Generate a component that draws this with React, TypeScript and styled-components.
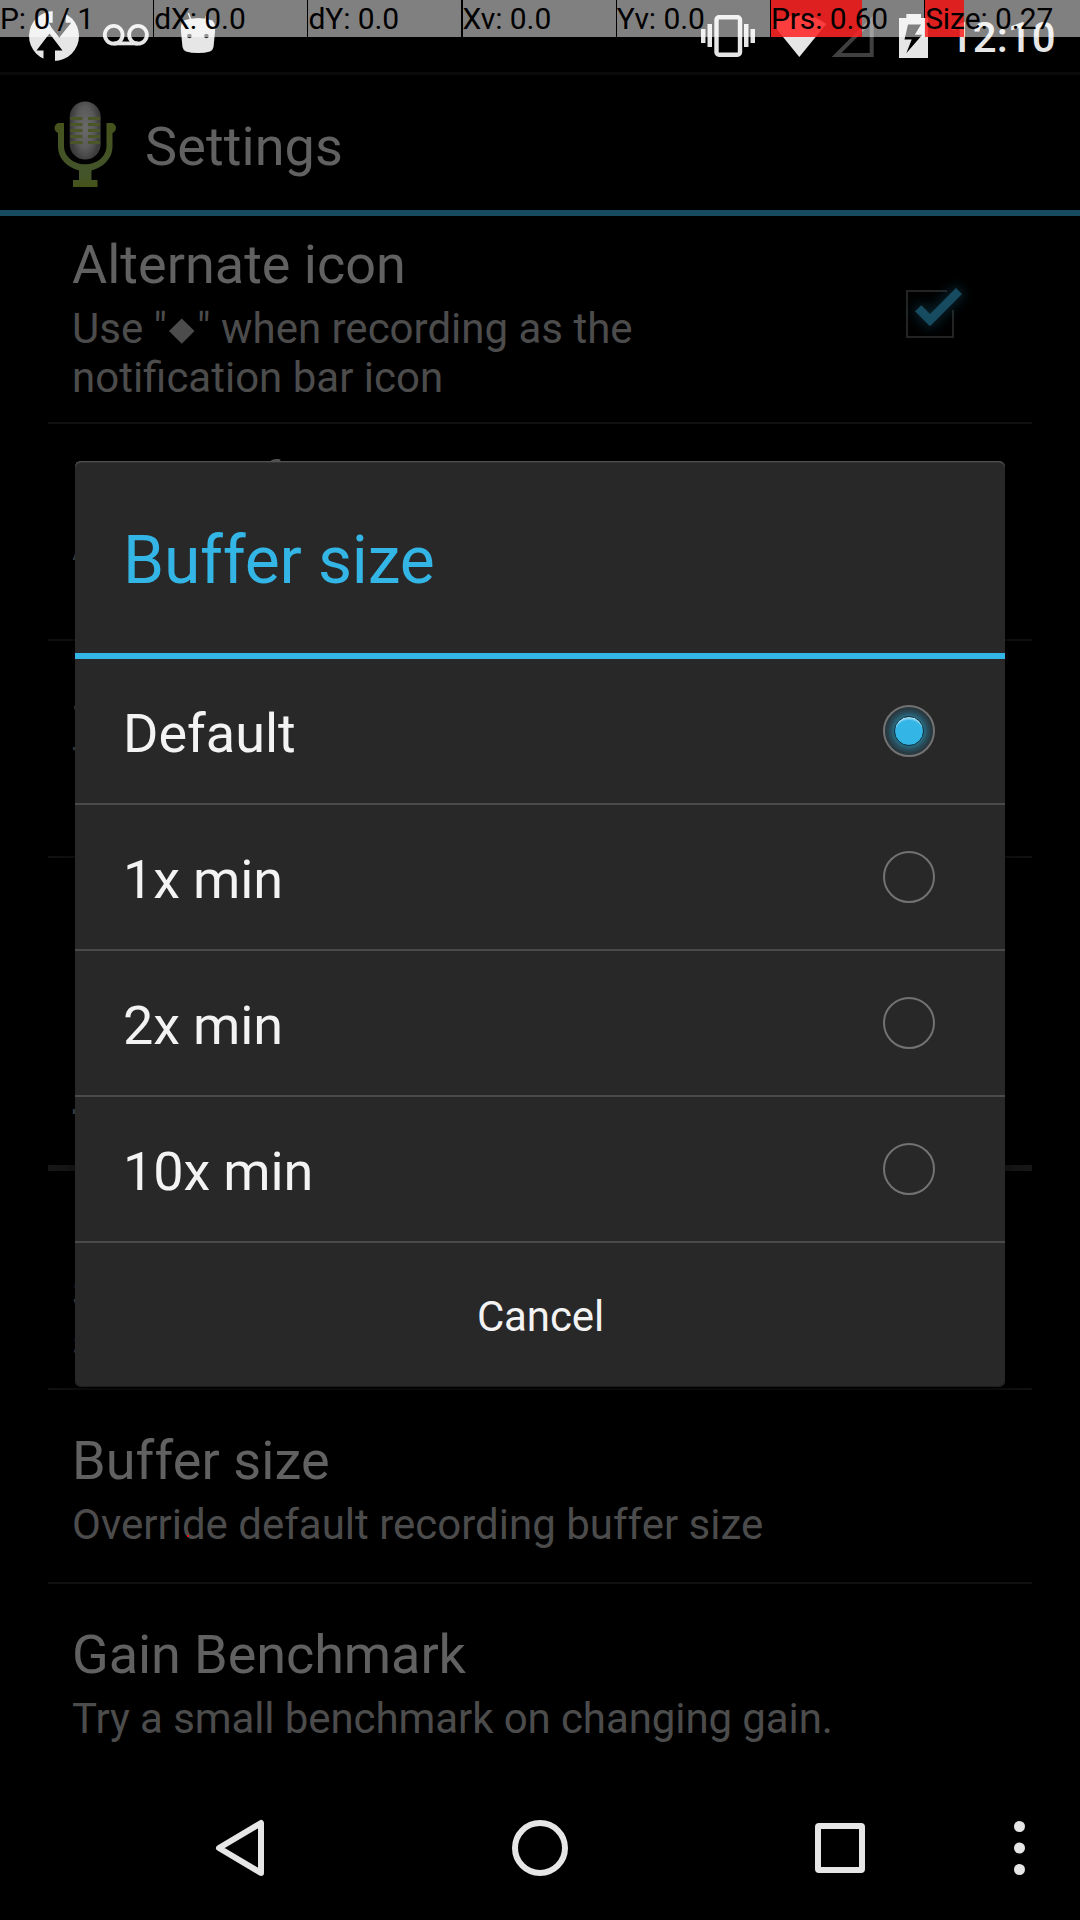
import React from 'react';
import styled, { createGlobalStyle } from 'styled-components';

const GlobalStyle = createGlobalStyle`
  html, body { margin: 0; background: #000; }
  *, *::before, *::after { box-sizing: border-box; }
`;

const Screen = styled.div`
  position: relative;
  display: flex;
  flex-direction: column;
  width: 1080px;
  height: 1920px;
  overflow: hidden;
  background: #000;
  color: #616161;
  font-family: Roboto, 'Noto Sans', sans-serif;
`;

/* Status bar */
const StatusBar = styled.header`
  display: flex;
  justify-content: space-between;
  height: 75px;
  border-bottom: 3px solid #0a0a0a;
  color: #e6e6e6;
`;

const IconGroup = styled.div`
  display: flex;
`;

const Clock = styled.span`
  width: 131px;
  margin-left: -6px;
  padding: 13px 24px 0 0;
  font-size: 42px;
  line-height: 49px;
  font-weight: 500;
`;

/* Pointer location overlay */
const PointerBar = styled.div`
  position: absolute;
  top: 0;
  left: 0;
  display: grid;
  grid-template-columns: repeat(6, 153px) 156px;
  column-gap: 1.2px;
  width: 1080px;
  height: 37px;
`;

const PointerCell = styled.div<{ $level?: number }>`
  padding-top: 1px;
  color: #000;
  font-size: 30px;
  line-height: 35px;
  letter-spacing: -0.08px;
  white-space: nowrap;
  background: ${({ $level = 0 }) =>
    `linear-gradient(90deg, rgba(255,0,0,.75) ${$level}px, transparent ${$level}px), rgba(255,255,255,.5)`};
`;

const TouchDot = styled.i`
  position: absolute;
  left: 187px;
  top: 1535px;
  width: 2px;
  height: 2px;
  background: #f00;
`;

/* Settings page */
const ActionBar = styled.div`
  display: flex;
  height: 141px;
  border-bottom: 6px solid #174c60;
`;

const Heading = styled.h1`
  margin: 40px 0 0 9px;
  font-size: 54px;
  line-height: 63px;
  font-weight: 400;
  letter-spacing: 0.1px;
`;

const List = styled.main`
  height: 1560px;
  padding: 0 48px;
  overflow: hidden;
`;

const Row = styled.section<{ $height: number; $offset?: number; $last?: boolean }>`
  display: flex;
  align-items: center;
  justify-content: space-between;
  height: ${({ $height }) => $height}px;
  margin-top: ${({ $offset = 0 }) => $offset}px;
  padding: 6px 44px 0 24px;
  border-bottom: ${({ $last }) => ($last ? 0 : 2)}px solid #101010;
`;

const Title = styled.h2<{ $track?: number }>`
  height: 63px;
  margin: 0 0 8px;
  font-size: 54px;
  line-height: 63px;
  font-weight: 400;
  letter-spacing: ${({ $track = 0 }) => $track}px;
`;

const Summary = styled.p<{ $lines?: number; $track?: number }>`
  height: ${({ $lines = 1 }) => $lines * 49}px;
  margin: 0;
  color: #4c4c4c;
  font-size: 42px;
  line-height: 49px;
  letter-spacing: ${({ $track = 0 }) => $track}px;
  white-space: pre-line;
`;

const Diamond = styled.span`
  display: inline-block;
  width: 17.5px;
  height: 17.5px;
  margin: 0 6.5px 4px 6px;
  background: #4c4c4c;
  transform: rotate(45deg);
`;

const CheckSlot = styled.div`
  display: flex;
  height: 88px;
`;

const Category = styled.h3`
  height: 98px;
  margin: 0;
  padding: 27px 24px 0;
  border-bottom: 6px solid #161616;
  color: #4c4c4c;
  font-size: 42px;
  line-height: 49px;
  font-weight: 700;
`;

/* Dialog */
const Dialog = styled.div`
  position: absolute;
  left: 75px;
  top: 461px;
  display: flex;
  flex-direction: column;
  width: 930px;
  height: 926px;
  border-radius: 6px;
  background: #282828;
  box-shadow: inset 0 1px #505050, inset 0 2px #363636, inset 0 -1px #1c1c1c, 0 4px 14px rgba(0, 0, 0, .6);
  color: #f3f3f3;
`;

const DialogTitle = styled.h2`
  height: 198px;
  margin: 0;
  padding: 61px 48px 0;
  border-bottom: 6px solid #33b5e5;
  color: #33b5e5;
  font-size: 66px;
  line-height: 77px;
  font-weight: 400;
  letter-spacing: -0.2px;
`;

const Option = styled.label`
  display: flex;
  align-items: center;
  justify-content: space-between;
  height: 146px;
  padding: 0 70px 0 48px;
  border-bottom: 2px solid #4a4a4a;
  font-size: 54px;
  line-height: 63px;
`;

const OptionText = styled.span<{ $track: number }>`
  padding-top: 4px;
  letter-spacing: ${({ $track }) => $track}px;
`;

const Radio = styled.span<{ $on?: boolean }>`
  display: flex;
  align-items: center;
  justify-content: center;
  width: 52px;
  height: 52px;
  border: 2px solid #727272;
  border-radius: 50%;
  background: ${({ $on }) =>
    $on ? 'radial-gradient(circle, #2a7089 42%, #29505f 54%, #283a42 66%, #282e31 76%)' : 'none'};

  &::after {
    content: '';
    display: ${({ $on }) => ($on ? 'block' : 'none')};
    width: 30px;
    height: 30px;
    border: 1px solid #0d2f3c;
    border-radius: 50%;
    background: radial-gradient(circle at 50% 62%, #33b5e5 62%, #b8e6f8 76%);
  }
`;

const Cancel = styled.button`
  flex: 1;
  margin: 0;
  padding: 2px 0 0 1px;
  border: 0;
  background: none;
  color: #f3f3f3;
  font: 400 42px/49px Roboto, sans-serif;
  letter-spacing: -0.1px;
`;

const NavBar = styled.nav`
  height: 144px;
`;

function LeftStatusIcons() {
  return (
    <svg width="240" height="72" viewBox="0 0 240 72" fill="#e6e6e6">
      <circle cx="54" cy="36" r="25" />
      <path fill="#000" d="M52.7 10.5h13v12.3h5.5L59.3 37.6 51.8 28l-3-5.2h3.9z" />
      <path fill="#e6e6e6" d="M49.5 29.5 59 41l-3 2-6.5-9.5L40 45l-3-1z" />
      <path fill="#000" d="M49.5 33.5 62.5 50.5H55V62H43.5V50.5h-7z" />
      <g fill="none" stroke="#e6e6e6" strokeWidth="3.8">
        <circle cx="113.7" cy="34.8" r="8.9" />
        <circle cx="138" cy="34.8" r="8.9" />
        <path d="M113.7 43.4H138" />
      </g>
      <path d="M183.5 20.5Q190 18 198 18t14.5 2.5Q216 24 215 32l-1.5 15Q213 50 210 51.5 205 53 198 53t-12-1.5Q183 50 182.5 47L181 32q-1-8 2.5-11.5z" />
      <path d="m188.3 13 3 8m16.4-8-3 8" stroke="#e6e6e6" strokeWidth="1.5" />
      <circle cx="189.4" cy="36" r="2.3" fill="#333" />
      <circle cx="206.4" cy="36" r="2.3" fill="#333" />
    </svg>
  );
}

function RightStatusIcons() {
  return (
    <svg width="260" height="72" viewBox="695 0 260 72" fill="#e6e6e6">
      <rect x="716.5" y="17.3" width="23.5" height="37.5" rx="2.5" fill="none" stroke="#e6e6e6" strokeWidth="4.4" />
      <path d="M707.5 24h4.5v23h-4.5zM701 29h4.5v14H701zM744 24h4.5v23H744zM750.5 29h4.5v14h-4.5z" />
      <path d="M799.3 57 772.5 24q11.5-9 26.8-9t26.9 9z" />
      <path d="M836.5 55H871.7V19.8z" fill="none" stroke="#404040" strokeWidth="4" />
      <path fillRule="evenodd" d="M906.3 14H921v4h7v40h-29V18h7.3zM908 24.5 904.5 39.5h7.2L906.3 53.3 922.3 34.7h-7.5L921 24.5z" />
    </svg>
  );
}

function Microphone() {
  return (
    <svg width="136" height="135" viewBox="0 75 136 135">
      <defs>
        <radialGradient id="micBody" cx=".5" cy=".45" r=".6" gradientTransform="translate(.1 0) scale(.8 1)">
          <stop offset="0" stopColor="#6a6a6a" />
          <stop offset=".6" stopColor="#5a5a5a" />
          <stop offset="1" stopColor="#3c3c3c" />
        </radialGradient>
        <linearGradient id="micStand" x1="0" x2="0" y1="0" y2="1">
          <stop offset="0" stopColor="#46531c" />
          <stop offset=".8" stopColor="#43542b" />
          <stop offset="1" stopColor="#465318" />
        </linearGradient>
      </defs>
      <path
        fill="url(#micStand)"
        d="M58 123h6v23c0 10 9 18.3 21.3 18.3S106.5 156 106.5 146v-23h6q3.5 2 3.5 5t-3.5 5v14c0 11-9 20.5-21 23.5v9.5h6V187H73v-7h6v-9.5c-12-3-21-12.5-21-23.5v-14q-3.5-2-3.5-5t3.5-5z"
      />
      <rect x="69.7" y="101.5" width="31" height="58" rx="15.5" fill="url(#micBody)" />
      <path d="M70.5 118.5h12M70.5 124.5h12M70.5 130.5h12M70.5 136.5h12M70.5 142.5h12M88 118.5h12M88 124.5h12M88 130.5h12M88 136.5h12M88 142.5h12" stroke="#4b5628" strokeWidth="2.8" />
    </svg>
  );
}

function Checkbox() {
  return (
    <svg width="100" height="80" viewBox="888 274 100 80">
      <defs>
        <filter id="checkGlow" x="-50%" y="-50%" width="200%" height="200%">
          <feGaussianBlur stdDeviation="6" />
        </filter>
      </defs>
      <path d="M947 291h-40v46h46v-27" fill="none" stroke="#242424" strokeWidth="2" />
      <path filter="url(#checkGlow)" opacity=".45" fill="#174b60" stroke="#174b60" strokeWidth="5" d="m915 311.3 6.3-6 8.7 8.7 26-26 6 6-32 32.3z" />
      <path fill="#174b60" d="m915 311.3 6.3-6 8.7 8.7 26-26 6 6-32 32.3z" />
    </svg>
  );
}

function NavIcons() {
  return (
    <svg width="1080" height="144" viewBox="0 1776 1080 144" fill="none" stroke="#e6e6e6" strokeWidth="6" strokeLinejoin="round">
      <path d="M261 1823v50l-42-25z" />
      <circle cx="540" cy="1848" r="25" />
      <rect x="818" y="1826" width="44" height="44" rx="1" />
      <g fill="#e6e6e6" stroke="none">
        <circle cx="1019.5" cy="1826.5" r="5.5" />
        <circle cx="1019.5" cy="1848" r="5.5" />
        <circle cx="1019.5" cy="1869.5" r="5.5" />
      </g>
    </svg>
  );
}

const pointerCells = [
  { text: 'P: 0 / 1' },
  { text: 'dX: 0.0' },
  { text: 'dY: 0.0' },
  { text: 'Xv: 0.0' },
  { text: 'Yv: 0.0' },
  { text: 'Prs: 0.60', level: 91 },
  { text: 'Size: 0.27', level: 39 },
];

const options = [
  { name: 'Default', track: 0 },
  { name: '1x min', track: -0.15 },
  { name: '2x min', track: -0.15 },
  { name: '10x min', track: -0.15 },
];

export default function App() {
  return (
    <Screen>
      <GlobalStyle />
      <StatusBar>
        <LeftStatusIcons />
        <IconGroup>
          <RightStatusIcons />
          <Clock>12:10</Clock>
        </IconGroup>
      </StatusBar>

      <ActionBar>
        <Microphone />
        <Heading>Settings</Heading>
      </ActionBar>

      <List>
        <Row $height={217} $offset={-9}>
          <div>
            <Title>Alternate icon</Title>
            <Summary $lines={2}>
              Use "<Diamond />" when recording as the{'\n'}notification bar icon
            </Summary>
          </div>
          <CheckSlot>
            <Checkbox />
          </CheckSlot>
        </Row>
        <Row $height={217}>
          <div>
            <Title $track={-0.6}>Pause of</Title>
            <Summary $lines={2}>A</Summary>
          </div>
        </Row>
        <Row $height={217}>
          <div>
            <Title>S</Title>
            <Summary $lines={2}>T</Summary>
          </div>
        </Row>
        <Row $height={215} $last />
        <Category>T</Category>
        <Row $height={219}>
          <div>
            <Title />
            <Summary $lines={2}>{'S\ns'}</Summary>
          </div>
        </Row>
        <Row $height={194}>
          <div>
            <Title $track={0.1}>Buffer size</Title>
            <Summary>Override default recording buffer size</Summary>
          </div>
        </Row>
        <Row $height={192} $last>
          <div>
            <Title $track={-0.08}>Gain Benchmark</Title>
            <Summary $track={-0.09}>Try a small benchmark on changing gain.</Summary>
          </div>
        </Row>
      </List>

      <NavBar>
        <NavIcons />
      </NavBar>

      <Dialog>
        <DialogTitle>Buffer size</DialogTitle>
        {options.map(({ name, track }, i) => (
          <Option key={name}>
            <OptionText $track={track}>{name}</OptionText>
            <Radio $on={i === 0} />
          </Option>
        ))}
        <Cancel>Cancel</Cancel>
      </Dialog>

      <PointerBar>
        {pointerCells.map(({ text, level }) => (
          <PointerCell key={text} $level={level}>{text}</PointerCell>
        ))}
      </PointerBar>
      <TouchDot />
    </Screen>
  );
}
